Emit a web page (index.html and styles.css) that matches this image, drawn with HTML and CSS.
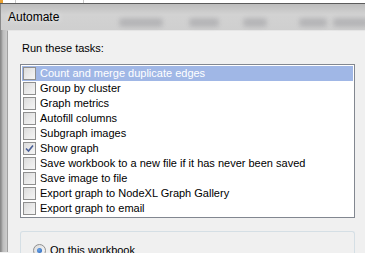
FILE: index.html
```html
<!DOCTYPE html>
<html lang="en">
<head>
  <meta charset="UTF-8" />
  <title>Automate</title>
  <link rel="stylesheet" href="styles.css">
</head>
<body>

  <div class="sheet">
    <span class="cell-mark"></span>
    <span class="cell cell-a"></span>
    <span class="cell cell-b"></span>
  </div>

  <div class="window">
    <div class="titlebar">
      <span class="title">Automate</span>
      <div class="glass">
        <span class="blob b1"></span>
        <span class="blob b2"></span>
        <span class="blob b3"></span>
        <span class="blob b4"></span>
        <span class="blob b5"></span>
      </div>
    </div>

    <div class="frame">
      <div class="frame-left"></div>
      <div class="client">
        <div class="heading">Run these tasks:</div>

        <div class="task-list" id="taskList"></div>

        <div class="group">
          <label class="radio-row">
            <span class="radio"><span class="dot"></span></span>
            On this workbook
          </label>
        </div>
      </div>
    </div>
  </div>

  <script>
    const tasks = [
      { name: "Count and merge duplicate edges", checked: false, selected: true },
      { name: "Group by cluster", checked: false },
      { name: "Graph metrics", checked: false },
      { name: "Autofill columns", checked: false },
      { name: "Subgraph images", checked: false },
      { name: "Show graph", checked: true },
      { name: "Save workbook to a new file if it has never been saved", checked: false },
      { name: "Save image to file", checked: false },
      { name: "Export graph to NodeXL Graph Gallery", checked: false },
      { name: "Export graph to email", checked: false }
    ];

    const taskList = document.getElementById("taskList");

    tasks.forEach(task => {
      const row = document.createElement("div");
      row.className = "task" + (task.selected ? " selected" : "");
      row.innerHTML = `
        <span class="check">${task.checked ? '<svg width="9" height="9" viewBox="0 0 9 9"><path d="M1 4.5 L3.5 7 L8 1.5" fill="none" stroke="#4a5f97" stroke-width="1.6"/></svg>' : ''}</span>
        <span class="task-name">${task.name}</span>
      `;
      taskList.appendChild(row);
    });
  </script>
</body>
</html>
```

FILE: styles.css
```css
body {
  margin: 0;
  padding: 0;
  width: 365px;
  height: 253px;
  overflow: hidden;
  background-color: #f0f0f0;
  font-family: 'Liberation Sans', Arial, sans-serif;
  font-size: 11px;
  color: #000;
}

.sheet {
  position: relative;
  height: 3px;
  background-color: #fff;
}

.cell-mark {
  position: absolute;
  left: 0;
  top: 0;
  width: 3px;
  height: 3px;
  background-color: #e8a030;
}

.cell {
  position: absolute;
  top: 0;
  width: 1px;
  height: 3px;
  background-color: #c8c8c8;
}

.cell-a { left: 15px; }
.cell-b { left: 83px; }

.window {
  border-top: 1px solid #5c5c5c;
}

.titlebar {
  position: relative;
  height: 26px;
  background: linear-gradient(#bdbdbd, #d2d2d2 40%, #cfcfcf);
  border-left: 1px solid #8a8a8a;
}

.title {
  position: absolute;
  left: 7px;
  top: 6px;
  font-size: 12px;
  color: #000;
  text-shadow: 0 0 6px rgba(255, 255, 255, 0.8);
}

.glass {
  position: absolute;
  left: 100px;
  right: 0;
  top: 14px;
  height: 10px;
}

.blob {
  position: absolute;
  top: 0;
  height: 9px;
  border-radius: 4px;
  background-color: rgba(90, 90, 100, 0.22);
  filter: blur(2px);
}

.b1 { left: 18px; width: 44px; }
.b2 { left: 88px; width: 30px; }
.b3 { left: 142px; width: 24px; }
.b4 { left: 198px; width: 28px; }
.b5 { left: 232px; width: 36px; }

.frame {
  display: flex;
  height: 222px;
}

.frame-left {
  width: 6px;
  background: linear-gradient(90deg, #8e8e8e, #bdbdbd 2px, #cdcdcd);
  border-left: 1px solid #8a8a8a;
}

.client {
  flex: 1;
  background-color: #f0f0f0;
  border-top: 1px solid #e6e6e6;
  border-left: 1px solid #a0a0a0;
  padding: 10px 0 0 12px;
}

.heading {
  margin-left: 2px;
  height: 14px;
  line-height: 14px;
}

.task-list {
  width: 333px;
  height: 152px;
  margin-top: 9px;
  background-color: #fff;
  border: 1px solid #828790;
}

.task {
  display: flex;
  align-items: center;
  height: 15px;
  margin: 1px 1px 0 1px;
  line-height: 15px;
  white-space: nowrap;
}

.task + .task {
  margin-top: 0;
}

.task.selected {
  background-color: #a0b7e6;
  color: #fff;
}

.check {
  display: flex;
  align-items: center;
  justify-content: center;
  width: 11px;
  height: 11px;
  margin: 0 4px 0 1px;
  border: 1px solid #8f8f8f;
  background: linear-gradient(135deg, #dcdcdc, #f6f6f6);
}

.group {
  width: 333px;
  height: 30px;
  margin-top: 13px;
  border: 1px solid #d5dfe5;
  border-bottom: none;
  border-radius: 3px 3px 0 0;
}

.radio-row {
  display: flex;
  align-items: center;
  gap: 4px;
  margin: 12px 0 0 12px;
  font-size: 11px;
  line-height: 13px;
}

.radio {
  display: flex;
  align-items: center;
  justify-content: center;
  width: 11px;
  height: 11px;
  border: 1px solid #8f8f8f;
  border-radius: 50%;
  background: linear-gradient(135deg, #dcdcdc, #f8f8f8);
}

.dot {
  width: 5px;
  height: 5px;
  border-radius: 50%;
  background: radial-gradient(circle at 40% 40%, #6ea5e6, #1f5fb8);
}
```
